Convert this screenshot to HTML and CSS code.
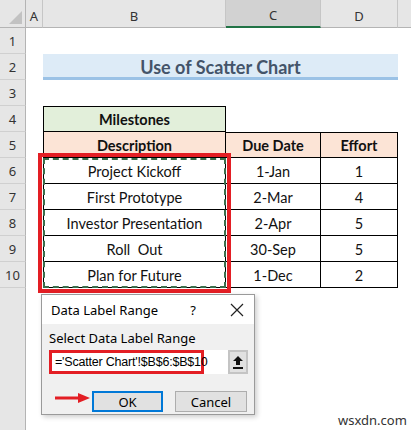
FILE: index.html
```html
<!DOCTYPE html>
<html lang="en">
  <head>
    <meta charset="UTF-8" />
    <title>Use of Scatter Chart</title>
    <link rel="stylesheet" href="styles.css">
  </head>
  <body>
    <div class="sheet">
      <div class="corner"><span class="corner-tri"></span></div>
      <div class="col-head">A</div>
      <div class="col-head">B</div>
      <div class="col-head selected">C</div>
      <div class="col-head">D</div>
      <div class="col-head last"></div>

      <div class="row-head">1</div>
      <div class="blank span"></div>

      <div class="row-head">2</div>
      <div class="blank"></div>
      <div class="title">Use of Scatter Chart</div>
      <div class="blank"></div>

      <div class="row-head">3</div>
      <div class="blank span"></div>

      <div class="row-head">4</div>
      <div class="blank"></div>
      <div class="cell milestones first top">Milestones</div>
      <div class="blank rest3"></div>

      <div class="row-head">5</div>
      <div class="blank"></div>
      <div class="cell head first">Description</div>
      <div class="cell head top">Due Date</div>
      <div class="cell head top">Effort</div>
      <div class="blank"></div>

      <div class="row-head">6</div>
      <div class="blank"></div>
      <div class="cell first">Project Kickoff</div>
      <div class="cell">1-Jan</div>
      <div class="cell">1</div>
      <div class="blank"></div>

      <div class="row-head">7</div>
      <div class="blank"></div>
      <div class="cell first">First Prototype</div>
      <div class="cell">2-Mar</div>
      <div class="cell">4</div>
      <div class="blank"></div>

      <div class="row-head">8</div>
      <div class="blank"></div>
      <div class="cell first">Investor Presentation</div>
      <div class="cell">2-Apr</div>
      <div class="cell">5</div>
      <div class="blank"></div>

      <div class="row-head">9</div>
      <div class="blank"></div>
      <div class="cell first">Roll&nbsp; Out</div>
      <div class="cell">30-Sep</div>
      <div class="cell">5</div>
      <div class="blank"></div>

      <div class="row-head">10</div>
      <div class="blank"></div>
      <div class="cell first">Plan for Future</div>
      <div class="cell">1-Dec</div>
      <div class="cell">2</div>
      <div class="blank"></div>

      <div class="row-head empty"></div>
      <div class="blank span"></div>
    </div>

    <!-- selected range B6:B10 -->
    <div class="range-box"><div class="ants"></div></div>

    <div class="dialog">
      <div class="dialog-title">
        <span class="dialog-name">Data Label Range</span>
        <span class="dialog-help">?</span>
        <svg class="dialog-close" width="14" height="14" viewBox="0 0 14 14">
          <path d="M1 1 L13 13 M13 1 L1 13" stroke="#222" stroke-width="1.2" fill="none" />
        </svg>
      </div>
      <div class="dialog-body">
        <div class="dialog-label">Select Data Label Range</div>
        <div class="range-input">
          <div class="range-field"><span class="range-text">='Scatter Chart'!$B$6:$B$10</span></div>
          <div class="range-btn">
            <svg width="12" height="14" viewBox="0 0 12 14">
              <path d="M6 1 L11 6 L8 6 L8 10 L4 10 L4 6 L1 6 Z" fill="#111" />
              <rect x="1" y="12" width="10" height="2" fill="#111" />
            </svg>
          </div>
        </div>
        <div class="dialog-buttons">
          <button class="btn ok">OK</button>
          <button class="btn">Cancel</button>
        </div>
      </div>
    </div>

    <svg class="pointer" width="36" height="12" viewBox="0 0 36 12">
      <path d="M0 6 L26 6" stroke="#e31e24" stroke-width="3" />
      <path d="M23 1 L35 6 L23 11 Z" fill="#e31e24" />
    </svg>

    <div class="watermark">wsxdn.com</div>
  </body>
</html>
```

FILE: styles.css
```css
body {
  margin: 0;
  width: 411px;
  height: 430px;
  overflow: hidden;
  position: relative;
  background: #ffffff;
  font-family: Lato, "Open Sans", sans-serif;
}

.sheet {
  display: grid;
  grid-template-columns: 26px 17px 183px 95px 77px 13px;
  grid-template-rows: 28px repeat(10, 26px) 1fr;
  height: 430px;
}

.corner,
.col-head {
  background: #e6e6e6;
  border-right: 1px solid #c6c6c6;
  border-bottom: 1px solid #b4b4b4;
  box-sizing: border-box;
  display: flex;
  align-items: center;
  justify-content: center;
  font-family: "Noto Sans", sans-serif;
  font-size: 13px;
  color: #333;
  padding-top: 4px;
}

.corner {
  position: relative;
  border-right-color: #b4b4b4;
}

.corner-tri {
  position: absolute;
  right: 3px;
  bottom: 3px;
  border-left: 13px solid transparent;
  border-bottom: 13px solid #c2c2c2;
}

.col-head.selected {
  background: #d2d2d2;
  border-bottom: 2px solid #217346;
}

.col-head.last {
  border-right: none;
}

.row-head {
  background: #e6e6e6;
  border-right: 1px solid #b4b4b4;
  border-bottom: 1px solid #d0d0d0;
  box-sizing: border-box;
  display: flex;
  align-items: flex-end;
  justify-content: center;
  padding-bottom: 3px;
  font-family: "Noto Sans", sans-serif;
  font-size: 13px;
  color: #333;
}

.row-head.empty {
  border-bottom: none;
}

.blank.span {
  grid-column: 2 / 7;
}

.blank.rest3 {
  grid-column: 4 / 7;
}

.title {
  grid-column: 3 / 6;
  background: #ddebf7;
  border-bottom: 3px solid #9bc2e6;
  box-sizing: border-box;
  display: flex;
  align-items: center;
  justify-content: center;
  font-size: 18px;
  font-weight: bold;
  color: #44546a;
  padding-top: 2px;
}

.cell {
  border-right: 1px solid #000;
  border-bottom: 1px solid #000;
  box-sizing: border-box;
  display: flex;
  align-items: center;
  justify-content: center;
  font-size: 14.5px;
  color: #111;
  padding-top: 1px;
}

.cell.first {
  border-left: 1px solid #000;
}

.cell.top {
  border-top: 1px solid #000;
}

.cell.milestones {
  background: #e2efda;
  font-weight: bold;
}

.cell.head {
  background: #fce4d6;
  font-weight: bold;
}

.range-box {
  position: absolute;
  left: 38px;
  top: 153px;
  width: 193px;
  height: 140px;
  border: 4px solid #e31e24;
  box-sizing: border-box;
  padding: 1px;
}

.ants {
  height: 100%;
  border: 2px dashed #3b6e4c;
  box-sizing: border-box;
}

.dialog {
  position: absolute;
  left: 41px;
  top: 294px;
  width: 214px;
  height: 121px;
  border: 1px solid #9a9a9a;
  box-sizing: border-box;
  box-shadow: 2px 2px 5px rgba(0, 0, 0, 0.2);
  display: flex;
  flex-direction: column;
  font-family: "Noto Sans", sans-serif;
  color: #000;
}

.dialog-title {
  height: 29px;
  background: #ffffff;
  display: flex;
  align-items: center;
  padding-left: 9px;
  font-size: 13px;
}

.dialog-name {
  flex: 1;
}

.dialog-help {
  width: 14px;
  text-align: center;
  margin-right: 30px;
}

.dialog-close {
  margin-right: 10px;
}

.dialog-body {
  flex: 1;
  background: #f0f0f0;
  padding: 5px 0 0 7px;
}

.dialog-label {
  font-size: 13px;
  line-height: 18px;
}

.range-input {
  display: flex;
  height: 24px;
  margin-top: 3px;
  width: 199px;
}

.range-field {
  flex: 1;
  background: #ffffff;
  display: flex;
}

.range-text {
  width: 155px;
  border: 3px solid #e31e24;
  box-sizing: border-box;
  font-family: "Liberation Sans", sans-serif;
  font-size: 12.5px;
  letter-spacing: -0.2px;
  display: flex;
  align-items: center;
  padding-left: 3px;
  white-space: nowrap;
}

.range-btn {
  width: 20px;
  background: #e1e1e1;
  border: 2px solid #c4c4c4;
  box-sizing: border-box;
  display: flex;
  align-items: center;
  justify-content: center;
}

.dialog-buttons {
  display: flex;
  gap: 12px;
  margin-top: 17px;
  margin-left: 43px;
}

.btn {
  width: 72px;
  height: 21px;
  background: #e1e1e1;
  border: 1px solid #adadad;
  font-family: "Noto Sans", sans-serif;
  font-size: 13px;
  color: #000;
  padding: 0;
}

.btn.ok {
  width: 71px;
  border: 2px solid #0078d7;
}

.pointer {
  position: absolute;
  left: 55px;
  top: 392px;
}

.watermark {
  position: absolute;
  left: 338px;
  top: 411px;
  font-family: "Noto Sans", sans-serif;
  font-size: 13px;
  color: #333;
}
```
